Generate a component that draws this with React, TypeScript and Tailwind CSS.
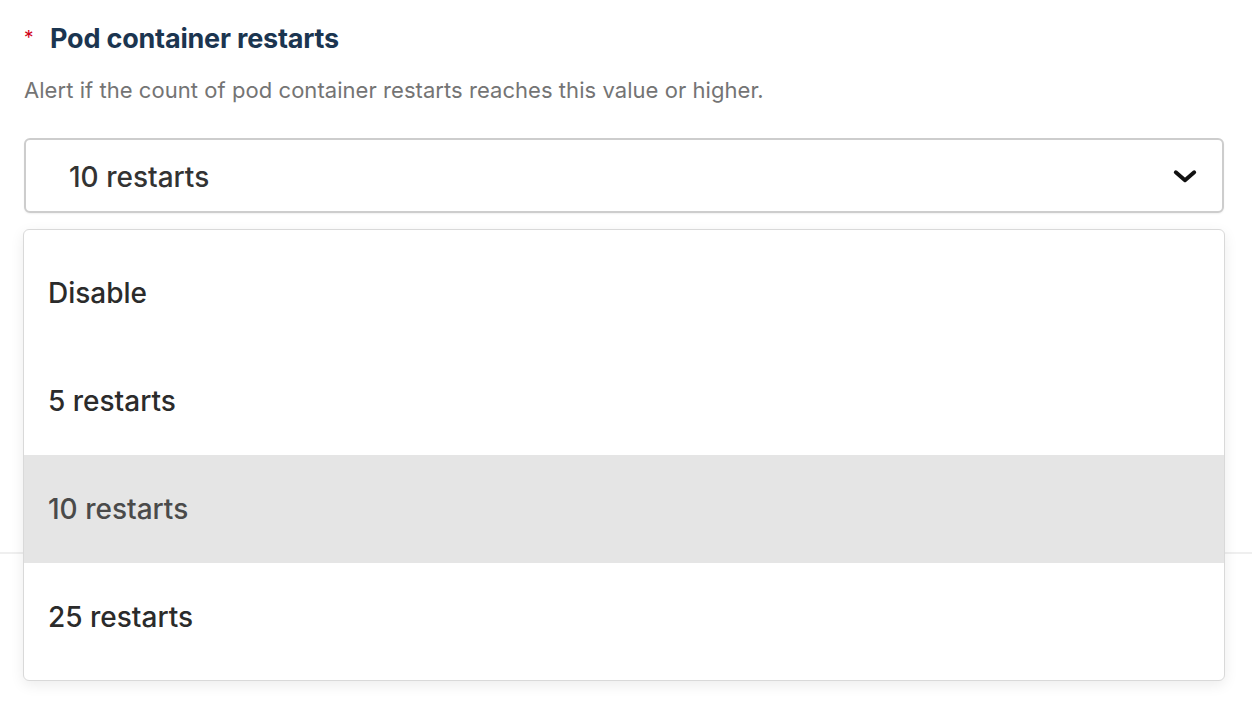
import React, { useState } from 'react'

const options = ['Disable', '5 restarts', '10 restarts', '25 restarts']

export default function App() {
  const [value, setValue] = useState('10 restarts')
  const [open, setOpen] = useState(true)

  return (
    <div className="w-[1252px] h-[702px] bg-white overflow-hidden font-['Inter',sans-serif]">
      <div className="pl-6 pr-7 pt-[23px]">
        <div className="flex items-center h-8">
          <span className="text-[#d0021b] text-[19px] w-[26px] leading-none -mt-1">*</span>
          <span className="text-[#1b3550] text-[27px] font-bold tracking-[-0.2px]">Pod container restarts</span>
        </div>
        <p className="mt-[21px] text-[#747474] text-[22px] tracking-[0.05px] leading-7">
          Alert if the count of pod container restarts reaches this value or higher.
        </p>

        <div className="relative mt-[34px]">
          <button
            onClick={() => setOpen(!open)}
            className="w-full h-[75px] flex items-center justify-between pl-[43px] pr-[24px] bg-white rounded-md border-2 border-[#cdcdcd] shadow-[0_1px_2px_rgba(0,0,0,0.06)] text-left"
          >
            <span className="text-[#333] text-[28px] font-medium pt-[2px]">{value}</span>
            <svg width="26" height="26" viewBox="0 0 24 24" fill="none" stroke="#111" strokeWidth="3.6" strokeLinecap="round" strokeLinejoin="round">
              <path d="M3.5 8.5 L12 16 L20.5 8.5" />
            </svg>
          </button>

          {open && (
            <div className="absolute left-[-1px] right-[-1px] top-[91px] z-10 py-[9px] bg-white rounded-md border border-[#d9d9d9] shadow-[0_4px_14px_rgba(0,0,0,0.08)]">
              {options.map((o) => (
                <div
                  key={o}
                  onClick={() => { setValue(o); setOpen(false) }}
                  className={
                    o === value
                      ? 'h-[108px] flex items-center px-6 bg-[#e5e5e5] text-[#4a4a4a] text-[28px] font-medium'
                      : 'h-[108px] flex items-center px-6 text-[#2b2b2b] text-[28px] font-medium'
                  }
                >
                  {o}
                </div>
              ))}
            </div>
          )}
        </div>
      </div>

      <div className="mt-[339px] h-[2px] bg-[#efefef]" />
    </div>
  )
}
